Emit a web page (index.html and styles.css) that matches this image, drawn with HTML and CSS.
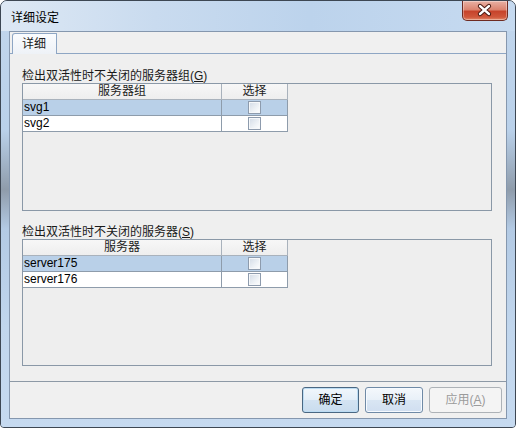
FILE: index.html
```html
<!DOCTYPE html>
<html>
<head>
<meta charset="utf-8">
<link rel="stylesheet" href="styles.css">
</head>
<body>
<div class="window">
  <div class="titlebar">
    <span class="title">详细设定</span>
    <div class="close">
      <svg width="46" height="20" viewBox="0 0 46 20">
        <path d="M18.5 6 L27.5 14 M27.5 6 L18.5 14" stroke="#4a1a12" stroke-width="4.6" stroke-linecap="round"/>
        <path d="M18.5 6 L27.5 14 M27.5 6 L18.5 14" stroke="#ffffff" stroke-width="2.6" stroke-linecap="round"/>
      </svg>
    </div>
  </div>
  <div class="frame">
    <div class="client">
      <div class="tabstrip"><div class="tab">详细</div></div>
      <div class="tabpanel">
        <div class="label">检出双活性时不关闭的服务器组(<u>G</u>)</div>
        <div class="table t1">
          <div class="row head"><div class="c1">服务器组</div><div class="c2">选择</div></div>
          <div class="row sel"><div class="c1">svg1</div><div class="c2"><span class="cb"></span></div></div>
          <div class="row"><div class="c1">svg2</div><div class="c2"><span class="cb"></span></div></div>
        </div>
        <div class="label l2">检出双活性时不关闭的服务器(<u>S</u>)</div>
        <div class="table t2">
          <div class="row head"><div class="c1">服务器</div><div class="c2">选择</div></div>
          <div class="row sel"><div class="c1">server175</div><div class="c2"><span class="cb"></span></div></div>
          <div class="row"><div class="c1">server176</div><div class="c2"><span class="cb"></span></div></div>
        </div>
      </div>
      <div class="buttons">
        <div class="btn ok">确定</div>
        <div class="btn cancel">取消</div>
        <div class="btn apply">应用(<u>A</u>)</div>
      </div>
    </div>
  </div>
</div>
</body>
</html>
```
FILE: styles.css
```css
* { box-sizing: border-box; }
html, body { margin: 0; padding: 0; background: #ffffff; }
body {
  font-family: "Liberation Sans", "Noto Sans CJK SC", sans-serif;
  font-size: 12px;
  color: #000;
}
.window {
  width: 516px;
  height: 428px;
  border: 1px solid #3d4753;
  border-radius: 7px 7px 4px 4px;
  overflow: hidden;
  background: #c0d5ec;
  display: flex;
  flex-direction: column;
}
.titlebar {
  height: 30px;
  flex: none;
  display: flex;
  align-items: flex-start;
  justify-content: space-between;
  background: linear-gradient(to right, #dde8f4 0%, #c9dbef 30%, #bcd3ec 60%, #c6daf0 100%);
}
.title {
  font-family: "Noto Sans CJK SC", sans-serif;
  font-size: 12px;
  line-height: 16px;
  margin: 8px 0 0 10px;
  color: #000;
}
.close {
  width: 46px;
  height: 20px;
  margin-right: 7px;
  border: 1px solid #6e2b22;
  border-top: none;
  border-radius: 0 0 5px 5px;
  background: linear-gradient(to bottom, #e9b1a4 0%, #dc8470 45%, #c7442c 55%, #d0583c 85%, #e28a6c 100%);
  box-shadow: inset 0 0 0 1px rgba(255,255,255,0.35);
  display: flex;
}
.close svg { display: block; margin: -1px 0 0 -1px; }
.frame {
  flex: 1;
  padding: 0 8px 8px 8px;
  background: linear-gradient(to bottom, #c0d5ec 0%, #bad1ea 25%, #a3b5c9 33%, #8f9cab 40%, #b3cae4 50%, #c1d6ed 75%, #c6daf0 100%);
}
.client {
  height: 100%;
  border: 1px solid #8597ae;
  background: #f0f0f0;
  display: flex;
  flex-direction: column;
}
.tabstrip {
  height: 21px;
  flex: none;
  display: flex;
  padding: 1px 0 0 2px;
}
.tab {
  width: 45px;
  height: 21px;
  margin-bottom: -1px;
  position: relative;
  z-index: 1;
  border: 1px solid #8ea6c4;
  border-bottom: none;
  border-radius: 3px 1px 0 0;
  background: linear-gradient(to bottom, #fafcfe, #eef2f7);
  font-family: "Noto Sans CJK SC", sans-serif;
  font-size: 12px;
  line-height: 17px;
  padding-left: 9px;
  color: #1a1a1a;
}
.tabpanel {
  height: 329px;
  flex: none;
  border-top: 1px solid #8ea6c4;
  border-bottom: 1px solid #8d99a6;
  padding: 15px 14px 0 12px;
  background: #efefef;
}
.label {
  height: 14px;
  line-height: 14px;
  color: #1a1a1a;
  white-space: nowrap;
}
.label u, .btn u { text-underline-offset: 1px; }
.l2 { margin-top: 14px; }
.table {
  border: 1px solid #8a98a7;
  background: #eeeeee;
}
.t1 { height: 128px; }
.t2 { height: 127px; }
.row {
  display: flex;
  height: 16px;
  line-height: 15px;
}
.row .c1, .row .c2 {
  border-right: 1px solid #8e9cab;
  border-bottom: 1px solid #8e9cab;
  background: #ffffff;
}
.row .c1 { width: 199px; padding-left: 1px; }
.row .c2 { width: 66px; display: flex; align-items: center; justify-content: center; }
.row.sel .c1, .row.sel .c2 { background: #b9d0e8; }
.row.head .c1, .row.head .c2 {
  background: linear-gradient(to bottom, #f7f7f7, #eeeeee);
  border-right: 1px solid #a9b2bc;
  border-bottom: 1px solid #a9b2bc;
  text-align: center;
  padding-left: 0;
  color: #222;
}
.row.head .c2 { display: block; }
.cb {
  display: block;
  width: 13px;
  height: 13px;
  border: 1px solid #8d9bad;
  background: linear-gradient(135deg, #d2dbe6 0%, #eef2f6 60%, #ffffff 100%);
  box-shadow: inset 0 0 0 1px #f6f8fa;
}
.buttons {
  flex: 1;
  display: flex;
  justify-content: flex-end;
  align-items: flex-start;
  gap: 6px;
  padding: 5px 4px 0 0;
}
.btn {
  height: 26px;
  border-radius: 3px;
  text-align: center;
  line-height: 24px;
  font-size: 12px;
  color: #000;
}
.ok {
  width: 57px;
  border: 1px solid #4a6782;
  box-shadow: inset 0 0 0 1px #bcdcf3;
  background: linear-gradient(to bottom, #f1f7fc 0%, #e3eef8 50%, #d3e3f2 51%, #c9dcee 100%);
}
.cancel {
  width: 58px;
  border: 1px solid #6f8aa6;
  box-shadow: inset 0 0 0 1px #f6faff;
  background: linear-gradient(to bottom, #f4f8fc 0%, #e8f0f8 50%, #d9e6f3 51%, #d0def0 100%);
}
.apply {
  width: 73px;
  border: 1px solid #adb2b7;
  background: #f4f4f4;
  color: #9b9b9b;
}
```
